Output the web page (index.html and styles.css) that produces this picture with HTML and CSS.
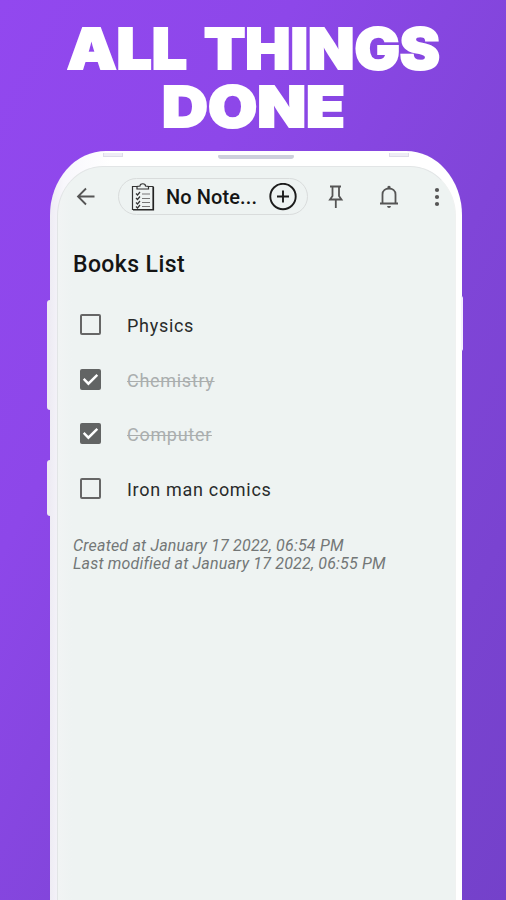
FILE: index.html
```html
<!DOCTYPE html>
<html lang="en">
<head>
<meta charset="utf-8">
<title>Books List</title>
<link rel="stylesheet" href="styles.css">
</head>
<body>
<main class="promo">
  <h1 class="headline">
    <svg width="506" height="150" viewBox="0 0 506 150">
      <text x="67" y="69" textLength="120" lengthAdjust="spacingAndGlyphs">ALL</text>
      <text x="204" y="69" textLength="236" lengthAdjust="spacingAndGlyphs">THINGS</text>
      <text x="162" y="126.500" textLength="183" lengthAdjust="spacingAndGlyphs">DONE</text>
    </svg>
  </h1>
  <section class="phone">
    <i class="side volume"></i><i class="side power"></i><i class="side right"></i>
    <i class="band band-left"></i><i class="speaker"></i><i class="band band-right"></i>
    <div class="screen">
      <header class="toolbar">
        <svg class="back" width="20" height="20" viewBox="0 0 20 20"><path d="M18.500 9.500H2M10 1.500l-8 8 8 8" fill="none" stroke="#555" stroke-width="1.800"/></svg>
        <div class="pill">
          <svg class="clipboard" width="24" height="28" viewBox="0 0 24 28" fill="none" stroke="#333" stroke-width="1.200">
            <path d="M6 3.500H1.500v23H22V3.500h-4"/><path d="M22.500 4v23H2" stroke="#222"/>
            <path d="M6 6V3.500l3-.5c0-3 5.500-3 5.500 0l3 .5V6z"/>
            <path d="M5 10.500l1.500 1.500L9 9M5 15l1.500 1.500L9 13.500M5 19.500L6.500 21 9 18M5 23.500L6.500 25 9 22"/>
            <path d="M11 11h8M11 15.500h8M11 19.500h8M11 23.500h8" stroke="#777"/>
          </svg>
          <span class="notebook">No Note...</span>
          <svg class="plus" width="28" height="28" viewBox="0 0 28 28" fill="none" stroke="#1c1c1c" stroke-width="1.900"><circle cx="14" cy="13.500" r="12.700"/><path d="M14 7.500v12M8 13.500h12"/></svg>
        </div>
        <svg class="pin" width="16" height="24" viewBox="0 0 16 24" fill="none" stroke="#555" stroke-width="1.800"><path d="M2 1.500h11M4.500 2v9L2 14.500h11.500L11 11V2M7.800 14.500V23"/></svg>
        <svg class="bell" width="20" height="24" viewBox="0 0 20 24"><path d="M1 18.500h18M3.500 18V9.500c0-8 13-8 13 0V18" fill="none" stroke="#555" stroke-width="1.800"/><path d="M8.500 3V1.500q1.500-1.500 3 0V3zM8 21h4q-.3 2-2 2t-2-2z" fill="#555"/></svg>
        <svg class="more" width="6" height="20" viewBox="0 0 6 20" fill="#555"><circle cx="3" cy="3" r="2.100"/><circle cx="3" cy="10" r="2.100"/><circle cx="3" cy="17" r="2.100"/></svg>
      </header>
      <h2 class="title">Books List</h2>
      <ul class="list">
        <li><span class="box"></span><span class="label">Physics</span></li>
        <li class="done"><span class="box"><svg width="21" height="21" viewBox="0 0 20 20"><path d="M3.500 9.500L8 14 16.500 5.500"/></svg></span><span class="label">Chemistry</span></li>
        <li class="done"><span class="box"><svg width="21" height="21" viewBox="0 0 20 20"><path d="M3.500 9.500L8 14 16.500 5.500"/></svg></span><span class="label">Computer</span></li>
        <li><span class="box"></span><span class="label">Iron man comics</span></li>
      </ul>
      <p class="meta">Created at January 17 2022, 06:54 PM<br>Last modified at January 17 2022, 06:55 PM</p>
    </div>
  </section>
</main>
</body>
</html>
```
FILE: styles.css
```css
* { box-sizing: border-box; }
body { margin: 0; font-family: Roboto, "Liberation Sans", sans-serif; }
.promo {
  height: 900px;
  overflow: hidden;
  background: linear-gradient(118deg, #9248ef 0%, #8d47e9 30%, #8045d8 60%, #7441ca 100%);
}
.headline { margin: 0; height: 151px; }
.headline svg { display: block; }
.headline text {
  font: 900 56.5px Inter, sans-serif;
  fill: #fff;
  stroke: #fff;
  stroke-width: 2px;
}
.phone {
  position: relative;
  width: 412px;
  height: 860px;
  margin-left: 50px;
  padding: 15px 6px 0 7px;
  border-radius: 56px 56px 0 0 / 64px 64px 0 0;
  background: linear-gradient(90deg, #eeecf4 0, #f8f7fc 14px, #fff 60px);
}
.screen {
  height: 845px;
  border: 1px solid #e2e5e6;
  border-right-color: #f0f2f1;
  border-radius: 46px 46px 0 0 / 50px 50px 0 0;
  background: linear-gradient(90deg, #f1f4f4 0, #eef3f2 14px);
}
.side { position: absolute; width: 3px; background: #eeeaf3; }
.volume { left: -3px; top: 149px; height: 110px; border-radius: 3px 0 0 3px; }
.power { left: -3px; top: 309px; height: 56px; border-radius: 3px 0 0 3px; }
.right { left: 411px; top: 145px; width: 2px; height: 55px; background: #f4efff; border-radius: 0 2px 2px 0; }
.band { position: absolute; top: 2px; width: 20px; height: 4px; border: solid #dedce9; border-width: 0 1px 1px; background: #eeedf5; }
.band-left { left: 53px; }
.band-right { left: 339px; }
.speaker { position: absolute; left: 168px; top: 4px; width: 76px; height: 4px; border-radius: 1px 1px 3px 3px; background: #cdd0dc; }
.toolbar { display: flex; align-items: center; height: 37px; margin-top: 11px; padding-left: 18px; }
.toolbar svg { flex: none; display: block; }
.pill {
  display: flex;
  align-items: center;
  flex: none;
  width: 190px;
  height: 37px;
  margin-left: 22px;
  padding-left: 12px;
  border: 1px solid #d9dcdc;
  border-radius: 19px;
}
.notebook { width: 92px; margin: 1px 11px 0; font-size: 20px; font-weight: 500; line-height: 24px; letter-spacing: .1px; white-space: nowrap; color: #151515; }
.pin { margin-left: 20px; }
.bell { margin-left: 35px; }
.more { margin-left: 35px; }
.title { margin: 36px 0 0 15px; font-size: 23px; font-weight: 500; line-height: 28px; letter-spacing: .4px; color: #151515; }
.list { margin: 18.5px 0 0; padding: 0 0 0 22px; list-style: none; }
.list li { display: flex; align-items: center; height: 54.5px; }
.box { width: 21px; height: 21px; border: 2px solid #666; border-radius: 2px; }
.label { margin: 3px 0 0 26px; font-size: 18px; line-height: 22px; letter-spacing: .7px; color: #292b2b; }
.done .box { background: #626464; border-width: 0; }
.done svg { display: block; fill: none; stroke: #fff; stroke-width: 2.3; }
.done .label { color: #aaaeae; text-decoration: line-through; text-decoration-thickness: 1px; }
.meta { margin: 21px 0 0 15px; font-size: 16px; font-style: italic; line-height: 18.5px; letter-spacing: .19px; color: #737777; white-space: nowrap; }
```
